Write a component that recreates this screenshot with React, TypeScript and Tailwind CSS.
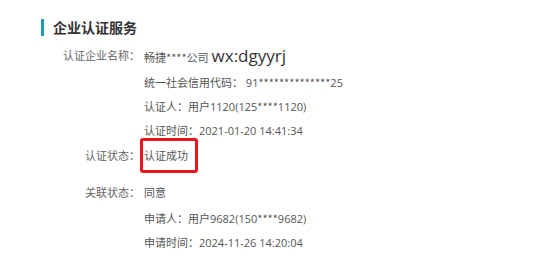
import React from "react";

const font = "font-['Open_Sans','Noto_Sans_CJK_SC',sans-serif]";

function Row({ children, h = "h-[25px]" }: { children: React.ReactNode; h?: string }) {
  return <div className={`flex shrink-0 items-center ${h} text-[11px] text-[#555] whitespace-nowrap`}>{children}</div>;
}

function M({ n }: { n: number }) {
  return <span className="font-['Noto_Sans_CJK_SC',sans-serif]">{"*".repeat(n)}</span>;
}

export default function App() {
  return (
    <div className={`relative w-[554px] h-[255px] bg-white overflow-hidden ${font}`}>
      <div className="pl-[41px] pt-[18px] flex items-center h-[18px] box-content">
        <div className="w-[3px] h-[17px] bg-[#1a9db3]" />
        <div className="ml-[9px] text-[14px] font-bold text-[#333] leading-none font-['Noto_Sans_CJK_SC',sans-serif]">企业认证服务</div>
      </div>
      <div className="h-[7px]" />
      <div className="flex">
        <div className="w-[140px] flex flex-col items-end">
          <Row h="h-[27px]"><span className="text-[#666]">认证企业名称：</span></Row>
        </div>
        <div className="ml-[4px] flex flex-col">
          <Row h="h-[27px]">
            <span className="flex items-baseline">
              <span>畅捷<M n={4} />公司</span>
              <span className="ml-[3px] text-[17px] text-[#333] leading-none font-['Open_Sans',sans-serif]">wx:dgyyrj</span>
            </span>
          </Row>
          <Row><span>统一社会信用代码：&nbsp;91<M n={14} />25</span></Row>
          <Row h="h-[24px]"><span>认证人：用户1120(125<M n={4} />1120)</span></Row>
          <Row h="h-[25px]">认证时间：2021-01-20 14:41:34</Row>
        </div>
      </div>
      <div className="flex">
        <div className="w-[140px] flex flex-col items-end">
          <Row><span className="text-[#666]">认证状态：</span></Row>
        </div>
        <div className="ml-[4px] flex flex-col">
          <Row>
            <span className="relative">
              认证成功
              <span className="absolute left-[-4px] top-[-10px] w-[58px] h-[35px] border-[3px] border-[#e8161c] rounded-[3px]" />
            </span>
          </Row>
        </div>
      </div>
      <div className="h-[12px]" />
      <div className="flex">
        <div className="w-[140px] flex flex-col items-end">
          <Row><span className="text-[#666]">关联状态：</span></Row>
        </div>
        <div className="ml-[4px] flex flex-col">
          <Row>同意</Row>
          <Row><span>申请人：用户9682(150<M n={4} />9682)</span></Row>
          <Row>申请时间：2024-11-26 14:20:04</Row>
        </div>
      </div>
    </div>
  );
}
